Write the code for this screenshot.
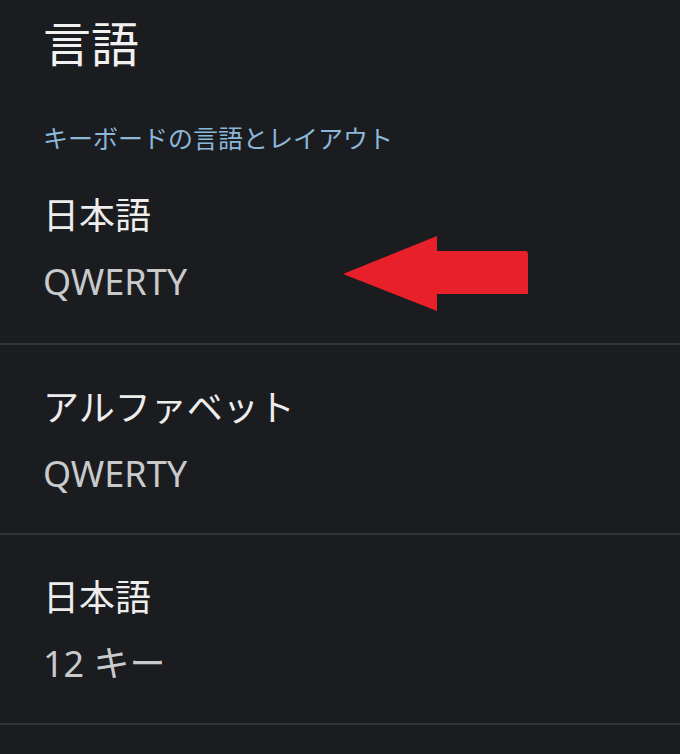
export default function App() {
  const font = { fontFamily: '"Noto Sans CJK JP", "Noto Sans", sans-serif' };
  const latin = { fontFamily: '"Noto Sans", "Noto Sans CJK JP", sans-serif' };
  return (
    <div className="w-[680px] h-[754px] overflow-hidden bg-[#1b1c20] relative" style={font}>
      <div className="pl-[43px] pt-[13px]">
        <div className="text-[48px] leading-[56px] text-[#f1f1f1]">言語</div>
        <div className="mt-[52px] text-[25px] leading-[32px] text-[#8bb7d9]">キーボードの言語とレイアウト</div>
      </div>
      <div className="relative">
        <div className="pl-[43px] pt-[40px] pb-[41px]">
          <div className="text-[36px] leading-[40px] text-[#ededed]">日本語</div>
          <div className="mt-[29px] text-[36px] leading-[40px] text-[#c9cacc]" style={latin}>QWERTY</div>
        </div>
        <svg className="absolute left-[343px] top-[83px]" width="186" height="76" viewBox="0 0 186 76">
          <path d="M0 38 L94 0 L94 15 L182 15 Q185 15 185 18 L185 58 L94 58 L94 75 Z" fill="#e8202a" />
        </svg>
      </div>
      <div className="h-[2px] bg-[#34353a]" />
      <div className="pl-[43px] pt-[40px] pb-[39px]">
        <div className="text-[36px] leading-[40px] text-[#ededed]">アルファベット</div>
        <div className="mt-[29px] text-[36px] leading-[40px] text-[#c9cacc]" style={latin}>QWERTY</div>
      </div>
      <div className="h-[2px] bg-[#34353a]" />
      <div className="pl-[43px] pt-[40px] pb-[39px]">
        <div className="text-[36px] leading-[40px] text-[#ededed]">日本語</div>
        <div className="mt-[29px] text-[36px] leading-[40px] text-[#c9cacc]" style={latin}>12 キー</div>
      </div>
      <div className="h-[2px] bg-[#34353a]" />
    </div>
  );
}
